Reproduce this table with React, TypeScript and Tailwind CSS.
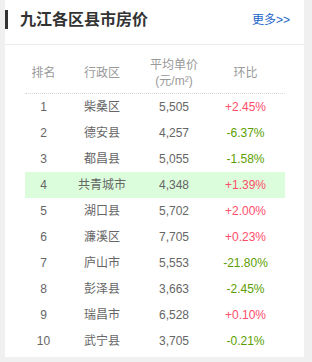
import React from "react";

interface Row {
  rank: number;
  name: string;
  price: string;
  change: string;
}

const rows: Row[] = [
  { rank: 1, name: "柴桑区", price: "5,505", change: "+2.45%" },
  { rank: 2, name: "德安县", price: "4,257", change: "-6.37%" },
  { rank: 3, name: "都昌县", price: "5,055", change: "-1.58%" },
  { rank: 4, name: "共青城市", price: "4,348", change: "+1.39%" },
  { rank: 5, name: "湖口县", price: "5,702", change: "+2.00%" },
  { rank: 6, name: "濂溪区", price: "7,705", change: "+0.23%" },
  { rank: 7, name: "庐山市", price: "5,553", change: "-21.80%" },
  { rank: 8, name: "彭泽县", price: "3,663", change: "-2.45%" },
  { rank: 9, name: "瑞昌市", price: "6,528", change: "+0.10%" },
  { rank: 10, name: "武宁县", price: "3,705", change: "-0.21%" },
];

export default function App() {
  return (
    <div
      className="w-[312px] h-[362px] bg-[#f0f0f0] pl-[5px]"
      style={{ fontFamily: '"Liberation Sans", "Noto Sans CJK SC", sans-serif' }}
    >
      <div className="w-[299px] h-[357px] bg-white">
        <div className="h-[45px] border-b border-[#ececec] flex items-center pr-[14px]">
          <div className="w-[3px] h-[19px] bg-[#333] mt-[-6px]" />
          <div className="ml-[12px] mt-[-5px] text-[16px] font-bold text-[#333] leading-none">九江各区县市房价</div>
          <div className="ml-auto mt-[-4px] text-[12px] text-[#1d65c9] leading-none">更多&gt;&gt;</div>
        </div>
        <div className="mx-[20px] mt-[7px] w-[260px] text-[12px]">
          <div className="flex h-[42px] items-center border-b border-dotted border-[#d8d8d8] text-[#999] leading-[16px]">
            <div className="w-[37px] text-center">排名</div>
            <div className="w-[80px] text-center">行政区</div>
            <div className="w-[64px] text-center">
              平均单价
              <br />
              (元/m²)
            </div>
            <div className="w-[79px] text-center">环比</div>
          </div>
          {rows.map((r) => (
            <div
              key={r.rank}
              className={`flex h-[26px] items-center text-[#666] ${r.rank === 4 ? "bg-[#dcfddc]" : ""}`}
            >
              <div className="w-[37px] text-center">{r.rank}</div>
              <div className="w-[80px] text-center">{r.name}</div>
              <div className="w-[64px] text-center">{r.price}</div>
              <div
                className={`w-[79px] text-center ${r.change.startsWith("+") ? "text-[#ff4d6a]" : "text-[#5c9e00]"}`}
              >
                {r.change}
              </div>
            </div>
          ))}
        </div>
      </div>
    </div>
  );
}
